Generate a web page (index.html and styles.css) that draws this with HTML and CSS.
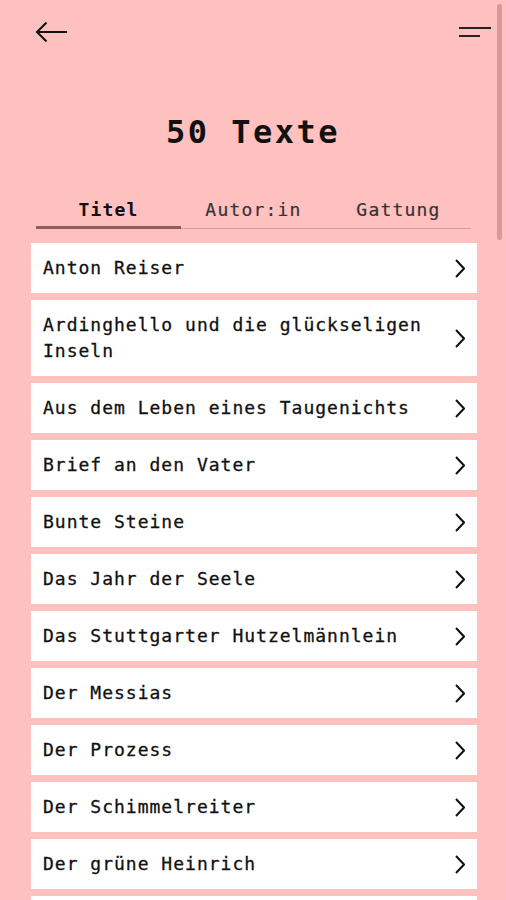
FILE: index.html
```html
<!DOCTYPE html>
<html lang="de">
<head>
    <meta charset="UTF-8">
    <meta name="viewport" content="width=device-width, initial-scale=1.0">
    <title>50 Texte</title>
    <link rel="stylesheet" href="styles.css">
</head>
<body>
    <div class="screen">
        <header class="topbar">
            <button class="icon-btn" aria-label="Zurück">
                <svg width="32" height="22" viewBox="0 0 32 22" fill="none" stroke="#111" stroke-width="2">
                    <path d="M32 11H2"/>
                    <path d="M11.5 1.5L2 11l9.5 9.5"/>
                </svg>
            </button>
            <button class="icon-btn" aria-label="Menü">
                <svg width="32" height="12" viewBox="0 0 32 12" fill="none" stroke="#222" stroke-width="2">
                    <path d="M0 2h32"/>
                    <path d="M0 10h21"/>
                </svg>
            </button>
        </header>

        <h1 class="title">50 Texte</h1>

        <nav class="tabs">
            <div class="tab active">Titel</div>
            <div class="tab">Autor:in</div>
            <div class="tab">Gattung</div>
        </nav>

        <ul class="list">
            <li class="item"><span>Anton Reiser</span><svg class="chev" width="10" height="19" viewBox="0 0 10 19"><path d="M1 1l8 8.5L1 18"/></svg></li>
            <li class="item"><span>Ardinghello und die glückseligen Inseln</span><svg class="chev" width="10" height="19" viewBox="0 0 10 19"><path d="M1 1l8 8.5L1 18"/></svg></li>
            <li class="item"><span>Aus dem Leben eines Taugenichts</span><svg class="chev" width="10" height="19" viewBox="0 0 10 19"><path d="M1 1l8 8.5L1 18"/></svg></li>
            <li class="item"><span>Brief an den Vater</span><svg class="chev" width="10" height="19" viewBox="0 0 10 19"><path d="M1 1l8 8.5L1 18"/></svg></li>
            <li class="item"><span>Bunte Steine</span><svg class="chev" width="10" height="19" viewBox="0 0 10 19"><path d="M1 1l8 8.5L1 18"/></svg></li>
            <li class="item"><span>Das Jahr der Seele</span><svg class="chev" width="10" height="19" viewBox="0 0 10 19"><path d="M1 1l8 8.5L1 18"/></svg></li>
            <li class="item"><span>Das Stuttgarter Hutzelmännlein</span><svg class="chev" width="10" height="19" viewBox="0 0 10 19"><path d="M1 1l8 8.5L1 18"/></svg></li>
            <li class="item"><span>Der Messias</span><svg class="chev" width="10" height="19" viewBox="0 0 10 19"><path d="M1 1l8 8.5L1 18"/></svg></li>
            <li class="item"><span>Der Prozess</span><svg class="chev" width="10" height="19" viewBox="0 0 10 19"><path d="M1 1l8 8.5L1 18"/></svg></li>
            <li class="item"><span>Der Schimmelreiter</span><svg class="chev" width="10" height="19" viewBox="0 0 10 19"><path d="M1 1l8 8.5L1 18"/></svg></li>
            <li class="item"><span>Der grüne Heinrich</span><svg class="chev" width="10" height="19" viewBox="0 0 10 19"><path d="M1 1l8 8.5L1 18"/></svg></li>
            <li class="item"><span>Der Sandmann</span><svg class="chev" width="10" height="19" viewBox="0 0 10 19"><path d="M1 1l8 8.5L1 18"/></svg></li>
        </ul>

        <div class="scroll-thumb"></div>
    </div>
</body>
</html>
```

FILE: styles.css
```css
html, body {
    margin: 0;
    padding: 0;
    overflow: hidden;
}

body {
    font-family: "DejaVu Sans Mono", "Liberation Mono", monospace;
    background-color: #ffc0c0;
    color: #111;
}

.screen {
    position: relative;
    height: 900px;
    overflow: hidden;
}

.topbar {
    height: 63px;
    padding: 0 15px 0 35px;
    display: flex;
    align-items: center;
    justify-content: space-between;
}

.icon-btn {
    background: none;
    border: none;
    padding: 0;
    display: flex;
    cursor: pointer;
}

.title {
    margin: 49px 0 0;
    font-size: 32px;
    line-height: 40px;
    letter-spacing: 2.5px;
    font-weight: bold;
    text-align: center;
}

.tabs {
    margin: 46px 35px 0 36px;
    display: grid;
    grid-template-columns: 1fr 1fr 1fr;
    align-items: end;
}

.tab {
    font-size: 18px;
    line-height: 24px;
    letter-spacing: 1.2px;
    color: #333;
    text-align: center;
    padding-bottom: 6px;
    border-bottom: 1px solid #d99c9c;
    -webkit-text-stroke: 0.2px currentColor;
}

.tab.active {
    font-weight: bold;
    color: #111;
    padding-bottom: 4px;
    border-bottom: 3px solid #8c5f5f;
    -webkit-text-stroke: 0;
}

.list {
    list-style: none;
    margin: 14px 29px 0 31px;
    padding: 0;
    display: flex;
    flex-direction: column;
    gap: 7px;
}

.item {
    background: #fff;
    padding: 12px 12px;
    display: flex;
    align-items: center;
    justify-content: space-between;
    gap: 20px;
    font-size: 18px;
    line-height: 26px;
    letter-spacing: 1px;
    -webkit-text-stroke: 0.3px currentColor;
}

.chev {
    flex: none;
    fill: none;
    stroke: #111;
    stroke-width: 2;
}

.scroll-thumb {
    position: absolute;
    top: 4px;
    right: 4px;
    width: 5px;
    height: 236px;
    border-radius: 3px;
    background: rgba(150, 80, 80, 0.35);
}
```
